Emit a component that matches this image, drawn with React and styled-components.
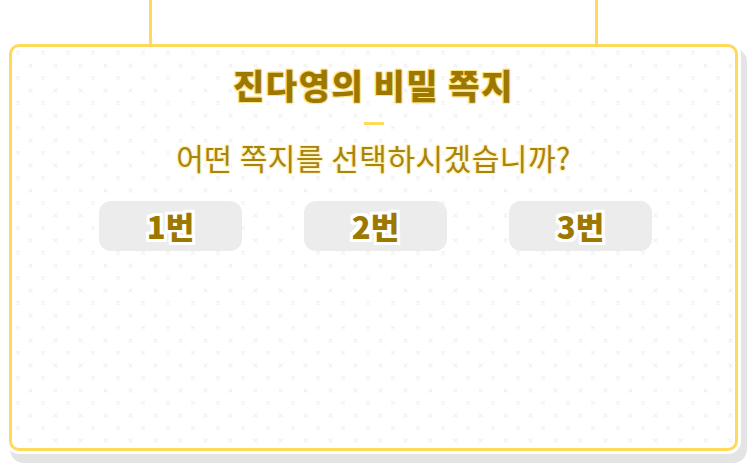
import React from "react";
import styled, { createGlobalStyle } from "styled-components";

const GlobalStyle = createGlobalStyle`
  html, body {
    margin: 0;
    padding: 0;
    background: #ffffff;
  }
  body {
    font-family: "Noto Sans CJK KR", "Noto Sans", sans-serif;
  }
`;

const crossTile =
  "data:image/svg+xml," +
  encodeURIComponent(
    `<svg xmlns="http://www.w3.org/2000/svg" width="25" height="25" viewBox="0 0 25 25">` +
      `<g stroke="#f1f1f1" stroke-width="1.2" stroke-linecap="round">` +
      `<path d="M7.5 7.5l3 3M10.5 7.5l-3 3"/>` +
      `<path d="M20 20l3 3M23 20l-3 3"/>` +
      `</g></svg>`
  );

const gold = "#9c7800";

const outline = (c, w) => `
  ${-w}px 0 0 ${c}, ${w}px 0 0 ${c}, 0 ${-w}px 0 ${c}, 0 ${w}px 0 ${c},
  ${-w}px ${-w}px 0 ${c}, ${w}px ${-w}px 0 ${c}, ${-w}px ${w}px 0 ${c}, ${w}px ${w}px 0 ${c}
`;

const Page = styled.div`
  width: 750px;
  height: 464px;
  overflow: hidden;
`;

const Hanger = styled.div`
  height: 44px;
  margin: 0 152px 0 149px;
  display: flex;
  justify-content: space-between;
`;

const String = styled.div`
  width: 3px;
  height: 100%;
  background: #ffd95a;
`;

const Card = styled.section`
  width: 729px;
  height: 407px;
  margin-left: 9px;
  box-sizing: border-box;
  border: 3px solid #ffd95a;
  border-radius: 10px;
  background: #fff url("${crossTile}") -3px -3px repeat;
  box-shadow: 0 0 0 3px #ffffff, 5px 8px 0 4px #e4e4e4;
  display: flex;
  flex-direction: column;
  align-items: center;
  padding-top: 18px;
`;

const Title = styled.h1`
  margin: 0;
  font-size: 34px;
  line-height: 40px;
  font-weight: 900;
  letter-spacing: 1.5px;
  color: ${gold};
  text-shadow: ${outline("#ffe58a", 1)};
`;

const Dash = styled.div`
  width: 20px;
  height: 3px;
  margin-top: 17px;
  background: #ffd95a;
`;

const Question = styled.p`
  margin: 14px 0 0;
  font-size: 30px;
  line-height: 36px;
  font-weight: 400;
  letter-spacing: 0.5px;
  color: #a8850a;
  text-shadow: ${outline("#fff3c4", 1)};
`;

const Choices = styled.div`
  margin-top: 26px;
  display: flex;
  gap: 62px;
  padding-left: 4px;
`;

const Choice = styled.button`
  width: 143px;
  height: 50px;
  border: none;
  border-radius: 12px;
  background: #ececec;
  font-family: inherit;
  font-size: 31px;
  font-weight: 900;
  line-height: 50px;
  color: ${gold};
  text-shadow: ${outline("#ffffff", 2)}, ${outline("#ffffff", 3)};
  cursor: pointer;
  padding: 0;
`;

export default function App() {
  return (
    <Page>
      <GlobalStyle />
      <Hanger>
        <String />
        <String />
      </Hanger>
      <Card>
        <Title>진다영의 비밀 쪽지</Title>
        <Dash />
        <Question>어떤 쪽지를 선택하시겠습니까?</Question>
        <Choices>
          {["1번", "2번", "3번"].map((label) => (
            <Choice key={label}>{label}</Choice>
          ))}
        </Choices>
      </Card>
    </Page>
  );
}
